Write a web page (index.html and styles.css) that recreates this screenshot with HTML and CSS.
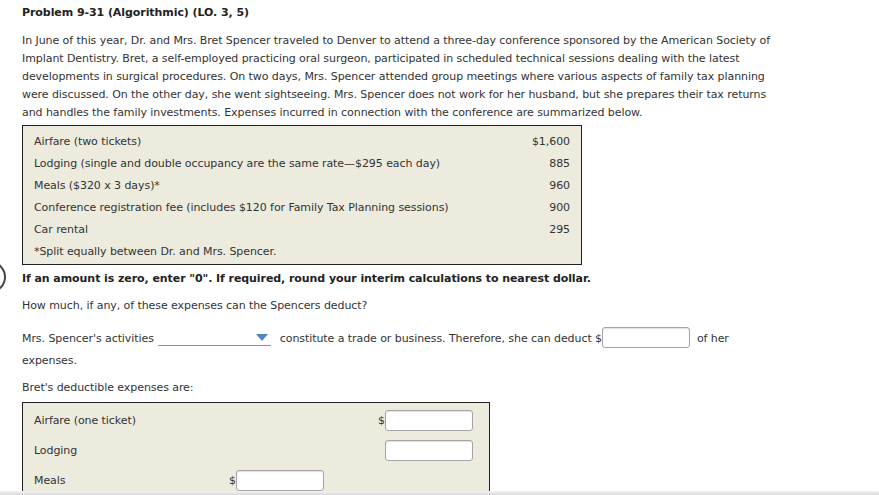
FILE: index.html
```html
<!DOCTYPE html>
<html>
<head>
<meta charset="utf-8">
<link rel="stylesheet" href="styles.css">
</head>
<body>
<div class="ring"></div>
<div class="page">
  <h1 class="title">Problem 9-31 (Algorithmic) (LO. 3, 5)</h1>
  <p class="intro">In June of this year, Dr. and Mrs. Bret Spencer traveled to Denver to attend a three-day conference sponsored by the American Society of Implant Dentistry. Bret, a self-employed practicing oral surgeon, participated in scheduled technical sessions dealing with the latest developments in surgical procedures. On two days, Mrs. Spencer attended group meetings where various aspects of family tax planning were discussed. On the other day, she went sightseeing. Mrs. Spencer does not work for her husband, but she prepares their tax returns and handles the family investments. Expenses incurred in connection with the conference are summarized below.</p>
  <div class="expenses">
    <div class="row"><span>Airfare (two tickets)</span><span>$1,600</span></div>
    <div class="row"><span>Lodging (single and double occupancy are the same rate—$295 each day)</span><span>885</span></div>
    <div class="row"><span>Meals ($320 x 3 days)*</span><span>960</span></div>
    <div class="row"><span>Conference registration fee (includes $120 for Family Tax Planning sessions)</span><span>900</span></div>
    <div class="row"><span>Car rental</span><span>295</span></div>
    <div class="row"><span>*Split equally between Dr. and Mrs. Spencer.</span></div>
  </div>
  <p class="note">If an amount is zero, enter "0". If required, round your interim calculations to nearest dollar.</p>
  <p class="q">How much, if any, of these expenses can the Spencers deduct?</p>
  <div class="answer">
    <div class="line"><span>Mrs. Spencer's activities</span> <span class="select"><span class="arrow"></span></span> <span>constitute a trade or business. Therefore, she can deduct $</span><span class="box"></span> &nbsp;<span>of her</span></div>
    <div class="line2">expenses.</div>
  </div>
  <p class="q2">Bret's deductible expenses are:</p>
  <div class="bret">
    <span class="lbl">Airfare (one ticket)</span><span></span><span class="cell"><span class="dollar">$</span><span class="box"></span></span>
    <span class="lbl">Lodging</span><span></span><span class="cell"><span class="dollar"></span><span class="box"></span></span>
    <span class="lbl">Meals</span><span class="cell"><span class="dollar">$</span><span class="box"></span></span><span></span>
  </div>
</div>
<div class="shade"></div>
</body>
</html>
```

FILE: styles.css
```css
html, body {
  margin: 0;
  padding: 0;
  background: #fff;
  overflow: hidden;
}
body {
  font-family: "DejaVu Sans", Verdana, sans-serif;
  font-size: 11px;
  letter-spacing: -0.07px;
  color: #333;
  height: 495px;
  position: relative;
}
.page {
  padding: 5px 0 0 22px;
  width: 760px;
}
.title {
  font-size: 11px;
  font-weight: bold;
  line-height: 16px;
  margin: 0 0 11px;
  color: #222;
}
.intro {
  margin: 0;
  line-height: 18px;
  width: 760px;
}
.expenses {
  margin-top: 3px;
  width: 536px;
  background: #ecebde;
  border: 1px solid #222;
  padding: 5px 11px 1px;
}
.expenses .row {
  display: flex;
  justify-content: space-between;
  height: 22px;
  line-height: 22px;
}
.note {
  margin: 5px 0 0;
  font-weight: bold;
  line-height: 18px;
  color: #222;
}
.q {
  margin: 9px 0 0;
  line-height: 18px;
}
.answer {
  margin: 13px 0 0;
  line-height: 22px;
  width: 740px;
}
.line {
  white-space: nowrap;
}
.select {
  display: inline-block;
  vertical-align: -4px;
  width: 113px;
  height: 14px;
  border-bottom: 1px solid #7c9bb8;
  margin: 0 5px 0 1px;
  position: relative;
}
.arrow {
  position: absolute;
  right: 3px;
  top: 3px;
  width: 0;
  height: 0;
  border-left: 6px solid transparent;
  border-right: 6px solid transparent;
  border-top: 7px solid #4f86be;
}
.box {
  display: inline-block;
  width: 86px;
  height: 19px;
  background: #fff;
  border: 1px solid #a5a5a5;
  border-radius: 3px;
  box-shadow: inset 0 1px 1px rgba(0,0,0,0.12);
  vertical-align: middle;
}
.line .box {
  margin-top: -3px;
}
.q2 {
  margin: 7px 0 0;
  line-height: 18px;
}
.bret {
  margin-top: 5px;
  width: 455px;
  background: #ecebde;
  border: 1px solid #222;
  border-bottom: none;
  padding: 2px 0 20px 11px;
  display: grid;
  grid-template-columns: 195px 149px 1fr;
  grid-auto-rows: 30px;
  align-items: center;
}
.cell {
  display: flex;
  align-items: center;
}
.dollar {
  width: 7px;
  text-align: right;
}
.ring {
  position: absolute;
  left: -26px;
  top: 261px;
  width: 28px;
  height: 28px;
  border: 2px solid #444;
  border-radius: 50%;
}
.shade {
  position: absolute;
  left: 0;
  right: 0;
  bottom: 0;
  height: 4px;
  background: linear-gradient(#f4f4f4, #d8d8d8);
}
```
